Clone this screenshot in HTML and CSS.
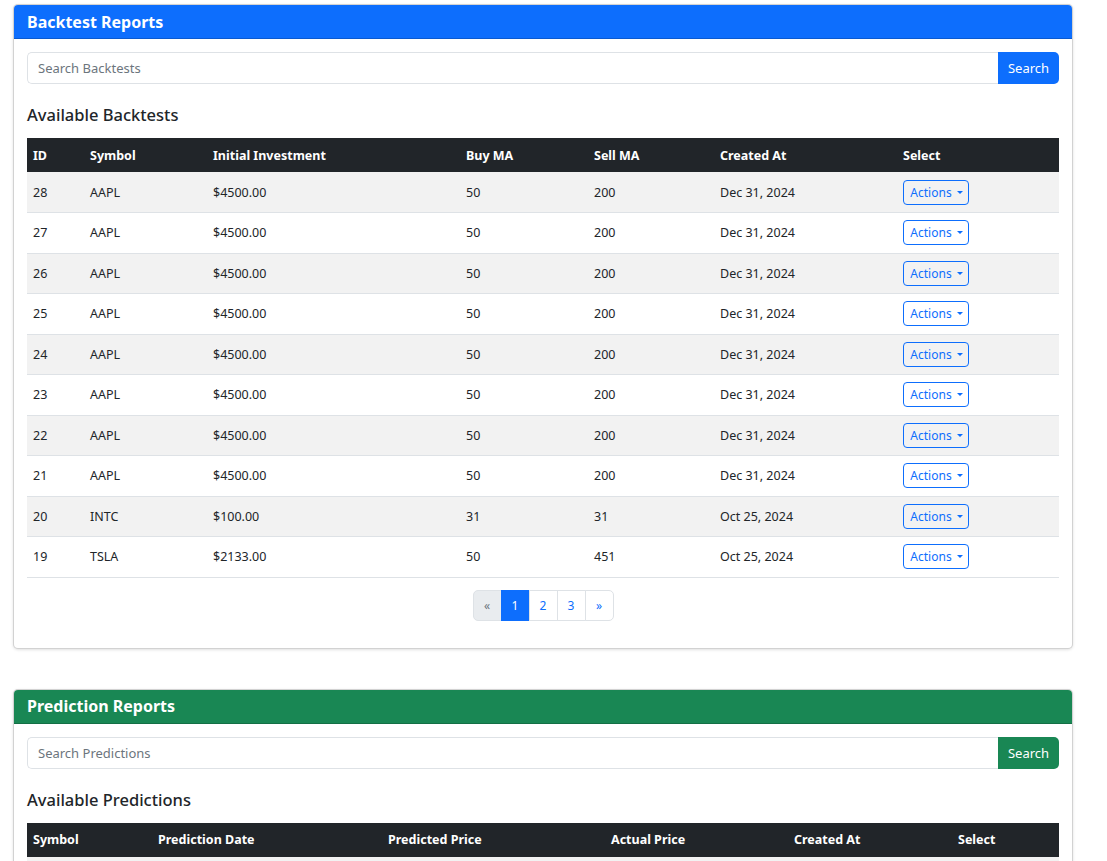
FILE: index.html
```html
<!DOCTYPE html>
<html>
<head>
<meta charset="utf-8">
<link rel="stylesheet" href="styles.css">
</head>
<body>
<div class="page">
  <section class="card">
    <div class="card-header primary">Backtest Reports</div>
    <div class="card-body">
      <div class="search">
        <input class="search-input" type="text" placeholder="Search Backtests">
        <button class="search-btn primary">Search</button>
      </div>
      <h2 class="section-title">Available Backtests</h2>
      <table class="tbl">
        <colgroup>
          <col class="c-id"><col class="c-sym"><col class="c-init"><col class="c-buy"><col class="c-sell"><col class="c-created"><col class="c-select">
        </colgroup>
        <thead>
          <tr><th>ID</th><th>Symbol</th><th>Initial Investment</th><th>Buy MA</th><th>Sell MA</th><th>Created At</th><th>Select</th></tr>
        </thead>
        <tbody>
          <tr><td>28</td><td>AAPL</td><td>$4500.00</td><td>50</td><td>200</td><td>Dec 31, 2024</td><td><button class="act">Actions <span class="caret"></span></button></td></tr>
          <tr><td>27</td><td>AAPL</td><td>$4500.00</td><td>50</td><td>200</td><td>Dec 31, 2024</td><td><button class="act">Actions <span class="caret"></span></button></td></tr>
          <tr><td>26</td><td>AAPL</td><td>$4500.00</td><td>50</td><td>200</td><td>Dec 31, 2024</td><td><button class="act">Actions <span class="caret"></span></button></td></tr>
          <tr><td>25</td><td>AAPL</td><td>$4500.00</td><td>50</td><td>200</td><td>Dec 31, 2024</td><td><button class="act">Actions <span class="caret"></span></button></td></tr>
          <tr><td>24</td><td>AAPL</td><td>$4500.00</td><td>50</td><td>200</td><td>Dec 31, 2024</td><td><button class="act">Actions <span class="caret"></span></button></td></tr>
          <tr><td>23</td><td>AAPL</td><td>$4500.00</td><td>50</td><td>200</td><td>Dec 31, 2024</td><td><button class="act">Actions <span class="caret"></span></button></td></tr>
          <tr><td>22</td><td>AAPL</td><td>$4500.00</td><td>50</td><td>200</td><td>Dec 31, 2024</td><td><button class="act">Actions <span class="caret"></span></button></td></tr>
          <tr><td>21</td><td>AAPL</td><td>$4500.00</td><td>50</td><td>200</td><td>Dec 31, 2024</td><td><button class="act">Actions <span class="caret"></span></button></td></tr>
          <tr><td>20</td><td>INTC</td><td>$100.00</td><td>31</td><td>31</td><td>Oct 25, 2024</td><td><button class="act">Actions <span class="caret"></span></button></td></tr>
          <tr><td>19</td><td>TSLA</td><td>$2133.00</td><td>50</td><td>451</td><td>Oct 25, 2024</td><td><button class="act">Actions <span class="caret"></span></button></td></tr>
        </tbody>
      </table>
      <nav class="pager">
        <span class="pg disabled">&laquo;</span>
        <span class="pg active">1</span>
        <span class="pg">2</span>
        <span class="pg">3</span>
        <span class="pg">&raquo;</span>
      </nav>
    </div>
  </section>

  <section class="card">
    <div class="card-header success">Prediction Reports</div>
    <div class="card-body">
      <div class="search">
        <input class="search-input" type="text" placeholder="Search Predictions">
        <button class="search-btn success">Search</button>
      </div>
      <h2 class="section-title">Available Predictions</h2>
      <table class="tbl">
        <colgroup>
          <col class="p-sym"><col class="p-date"><col class="p-pred"><col class="p-act"><col class="p-created"><col class="p-select">
        </colgroup>
        <thead>
          <tr><th>Symbol</th><th>Prediction Date</th><th>Predicted Price</th><th>Actual Price</th><th>Created At</th><th>Select</th></tr>
        </thead>
        <tbody>
          <tr><td>AAPL</td><td>Jan 02, 2025</td><td>$250.00</td><td>$243.85</td><td>Dec 31, 2024</td><td><button class="act">Actions <span class="caret"></span></button></td></tr>
        </tbody>
      </table>
    </div>
  </section>
</div>
</body>
</html>
```
FILE: styles.css
```css
* { box-sizing: border-box; }
html, body { margin: 0; padding: 0; background: #fff; }
body {
  font-family: "Noto Sans", "Open Sans", sans-serif;
  color: #212529;
  font-size: 13px;
}
.page {
  padding: 4px 34px 0 13px;
  display: flex;
  flex-direction: column;
  gap: 40px;
}
.card {
  border: 1px solid rgba(0,0,0,0.175);
  border-radius: 5px;
  overflow: hidden;
  box-shadow: 0 1px 3px rgba(0,0,0,0.12);
  background: #fff;
}
.card-header {
  height: 34px;
  padding: 0 13px;
  display: flex;
  align-items: center;
  color: #fff;
  font-weight: 700;
  font-size: 16px;
  border-bottom: 1px solid rgba(0,0,0,0.175);
}
.primary { background: #0d6efd; }
.success { background: #198754; }
.card-body {
  padding: 13px 13px 27px 13px;
}
.search {
  display: flex;
  height: 32px;
}
.search-input {
  flex: 1;
  border: 1px solid #dee2e6;
  border-right: none;
  border-radius: 5px 0 0 5px;
  padding: 0 10px;
  font-family: inherit;
  font-size: 13px;
  color: #212529;
  outline: none;
}
.search-input::placeholder { color: #6c757d; }
.search-btn {
  width: 61px;
  border: none;
  border-radius: 0 5px 5px 0;
  color: #fff;
  font-family: inherit;
  font-size: 13px;
  padding: 0;
}
.section-title {
  margin: 20px 0 12px 0;
  font-size: 16.5px;
  font-weight: 500;
  line-height: 22px;
}
.tbl {
  width: 100%;
  border-collapse: collapse;
  table-layout: fixed;
}
.c-id { width: 57px; }
.c-sym { width: 123px; }
.c-init { width: 253px; }
.c-buy { width: 128px; }
.c-sell { width: 126px; }
.c-created { width: 183px; }
.c-select { width: auto; }
.p-sym { width: 125px; }
.p-date { width: 230px; }
.p-pred { width: 223px; }
.p-act { width: 183px; }
.p-created { width: 164px; }
.p-select { width: auto; }
.tbl th {
  background: #212529;
  color: #fff;
  font-weight: 700;
  text-align: left;
  height: 34px;
  padding: 0 6px;
  font-size: 12.5px;
}
.tbl td {
  height: 40.5px;
  padding: 0 6px;
  border-bottom: 1px solid #dee2e6;
  font-size: 12.5px;
}
.tbl tbody tr:nth-child(odd) td { background: #f2f2f2; }
.act {
  height: 25px;
  width: 66px;
  border: 1px solid #0d6efd;
  border-radius: 4px;
  background: transparent;
  color: #0d6efd;
  font-family: inherit;
  font-size: 12px;
  padding: 0 0 0 1px;
  display: inline-flex;
  align-items: center;
  justify-content: center;
  gap: 5px;
}
.caret {
  width: 0; height: 0;
  border-left: 3px solid transparent;
  border-right: 3px solid transparent;
  border-top: 3.5px solid #0d6efd;
}
.pager {
  display: flex;
  justify-content: center;
  margin-top: 12px;
}
.pg {
  height: 31px;
  width: 29px;
  display: flex;
  align-items: center;
  justify-content: center;
  border: 1px solid #dee2e6;
  margin-left: -1px;
  color: #0d6efd;
  font-size: 12px;
  background: #fff;
}
.pg:first-child { border-radius: 5px 0 0 5px; margin-left: 0; }
.pg:last-child { border-radius: 0 5px 5px 0; }
.pg.disabled { background: #e9ecef; color: #6c757d; }
.pg.active { background: #0d6efd; border-color: #0d6efd; color: #fff; }
```
